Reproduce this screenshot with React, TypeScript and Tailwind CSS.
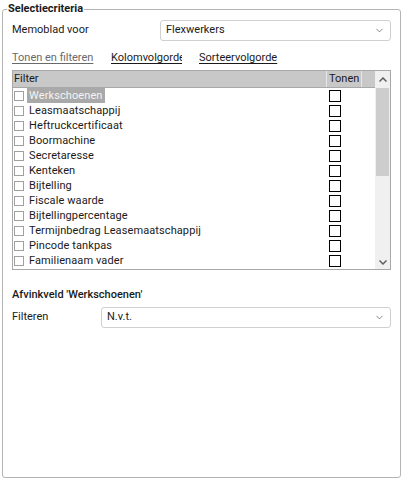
import { ChevronDown } from "lucide-react";

const filters = [
  "Werkschoenen",
  "Leasmaatschappij",
  "Heftruckcertificaat",
  "Boormachine",
  "Secretaresse",
  "Kenteken",
  "Bijtelling",
  "Fiscale waarde",
  "Bijtellingpercentage",
  "Termijnbedrag Leasemaatschappij",
  "Pincode tankpas",
  "Familienaam vader",
];

function Select({ value }: { value: string }) {
  return (
    <div className="flex-1 min-w-0 h-[21px] flex items-center justify-between border border-[#d0d0d0] rounded-[3px] bg-white pl-[5px] pr-[5px]">
      <span className="text-[11px] text-[#1a1a1a]">{value}</span>
      <ChevronDown className="w-[11px] h-[11px] text-[#555]" strokeWidth={1.5} />
    </div>
  );
}

export default function App() {
  return (
    <div className="w-[405px] h-[483px] bg-white pt-[2px] pl-[2px] font-['Roboto',sans-serif] text-[#1a1a1a]">
      <fieldset className="w-[399px] min-w-0 h-[476px] border border-[#b4b4b4] rounded-[3px] pl-[4px] pr-[4px]">
        <legend className="px-[1px] text-[11px] leading-[14px] font-bold text-[#1a1a1a]">
          Selectiecriteria
        </legend>

        <div className="pl-[5px] pr-[5px]">
          {/* Memoblad voor */}
          <div className="flex items-center mt-[4px]">
            <span className="w-[148px] text-[11px]">Memoblad voor</span>
            <Select value="Flexwerkers" />
          </div>

          {/* Tabs */}
          <div className="flex items-center mt-[10px] h-[15px] text-[11px]">
            <span className="w-[99px] text-[#6a6a6a] underline underline-offset-2">Tonen en filteren</span>
            <span className="w-[71px] overflow-hidden whitespace-nowrap underline underline-offset-2">Kolomvolgorde</span>
            <span className="ml-[17px] underline underline-offset-2">Sorteervolgorde</span>
          </div>

          {/* Grid */}
          <div className="mt-[4px] w-full h-[200px] border border-[#a8a8a8] flex">
            <div className="flex-1 flex flex-col">
              <div className="h-[17px] flex bg-[#c8c8c8] border-b border-[#a8a8a8] text-[11px] leading-[16px]">
                <div className="flex-1 pl-[1px]">Filter</div>
                <div className="w-[35px] border-l border-[#e8e8e8] pl-[2px]">Tonen</div>
                <div className="w-[14px] border-l border-[#e8e8e8]"></div>
              </div>
              {filters.map((f, i) => (
                <div key={f} className="h-[15px] flex items-center text-[11px] tracking-[0.1px]">
                  <div className="flex-1 flex items-center pl-[1px]">
                    <span className="w-[10px] h-[10px] border border-[#a0a0a0] bg-white"></span>
                    {i === 0 ? (
                      <span className="ml-[3px] px-[2px] bg-[#a9a9a9] text-[#f4f4f4] leading-[15px]">{f}</span>
                    ) : (
                      <span className="ml-[5px] leading-[15px]">{f}</span>
                    )}
                  </div>
                  <div className="w-[35px] pl-[3px] flex items-center">
                    <span className="w-[12px] h-[12px] border border-black"></span>
                  </div>
                  <div className="w-[14px]"></div>
                </div>
              ))}
            </div>

            {/* Scrollbar */}
            <div className="w-[15px] bg-[#f0f0f0] flex flex-col">
              <div className="h-[17px] flex items-center justify-center">
                <svg width="8" height="5" viewBox="0 0 8 5">
                  <path d="M0.5 4.5 L4 1 L7.5 4.5" fill="none" stroke="#606060" strokeWidth="1.5" />
                </svg>
              </div>
              <div className="h-[88px] mx-[1px] bg-[#cdcdcd]"></div>
              <div className="flex-1 flex items-end justify-center pb-[4px]">
                <svg width="8" height="5" viewBox="0 0 8 5">
                  <path d="M0.5 0.5 L4 4 L7.5 0.5" fill="none" stroke="#606060" strokeWidth="1.5" />
                </svg>
              </div>
            </div>
          </div>

          {/* Afvinkveld */}
          <div className="mt-[18px] text-[11px] leading-[13px] font-medium">Afvinkveld 'Werkschoenen'</div>
          <div className="flex items-center mt-[6px]">
            <span className="w-[89px] text-[11px]">Filteren</span>
            <Select value="N.v.t." />
          </div>
        </div>
      </fieldset>
    </div>
  );
}
